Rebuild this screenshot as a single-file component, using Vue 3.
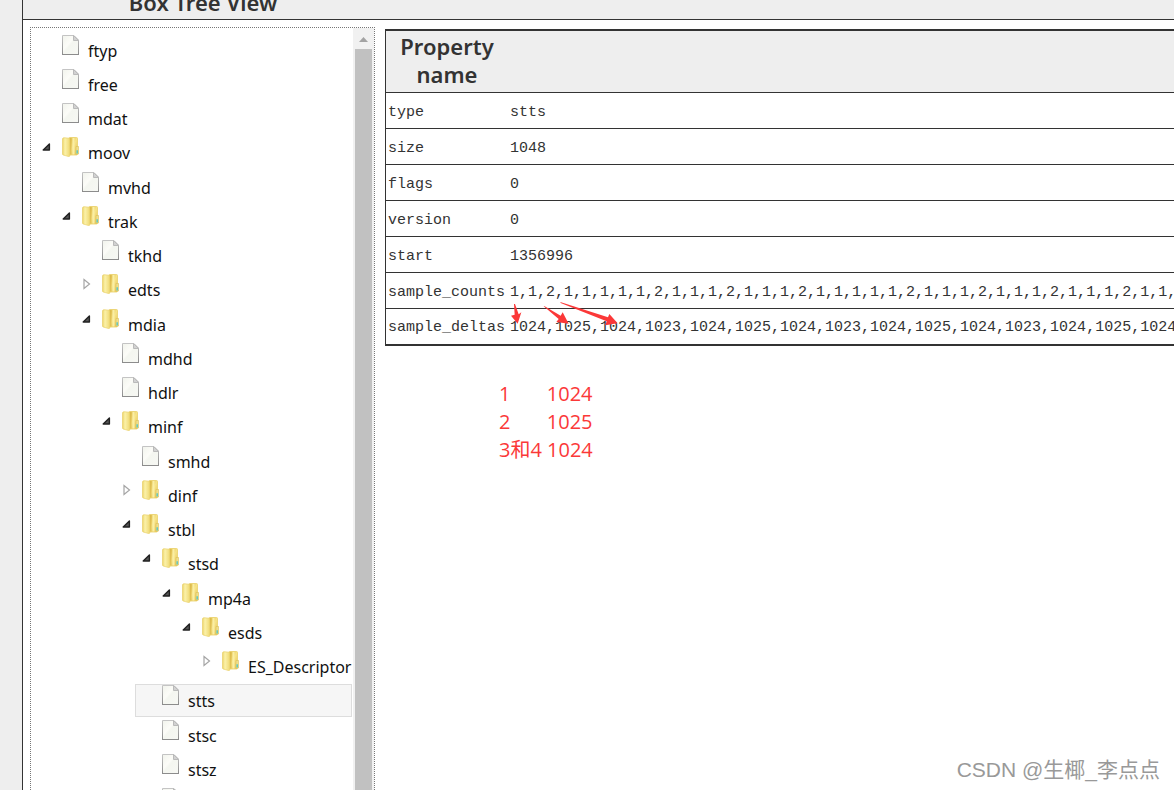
<script setup>
import { ref } from 'vue'

const nodes = [
  { name: 'ftyp', depth: 0, kind: 'file' },
  { name: 'free', depth: 0, kind: 'file' },
  { name: 'mdat', depth: 0, kind: 'file' },
  { name: 'moov', depth: 0, kind: 'open' },
  { name: 'mvhd', depth: 1, kind: 'file' },
  { name: 'trak', depth: 1, kind: 'open' },
  { name: 'tkhd', depth: 2, kind: 'file' },
  { name: 'edts', depth: 2, kind: 'closed' },
  { name: 'mdia', depth: 2, kind: 'open' },
  { name: 'mdhd', depth: 3, kind: 'file' },
  { name: 'hdlr', depth: 3, kind: 'file' },
  { name: 'minf', depth: 3, kind: 'open' },
  { name: 'smhd', depth: 4, kind: 'file' },
  { name: 'dinf', depth: 4, kind: 'closed' },
  { name: 'stbl', depth: 4, kind: 'open' },
  { name: 'stsd', depth: 5, kind: 'open' },
  { name: 'mp4a', depth: 6, kind: 'open' },
  { name: 'esds', depth: 7, kind: 'open' },
  { name: 'ES_Descriptor', depth: 8, kind: 'closed' },
  { name: 'stts', depth: 5, kind: 'file' },
  { name: 'stsc', depth: 5, kind: 'file' },
  { name: 'stsz', depth: 5, kind: 'file' },
  { name: 'stco', depth: 5, kind: 'file' }
]

const selected = ref('stts')

const counts = '1,1,2,1,1,1,1,1,2,1,1,1,2,1,1,1,2,1,1,1,1,1,2,1,1,1,2,1,1,1,2,1,1,1,2,1,1,1,2,1'
const deltas = Array(5).fill('1024,1025,1024,1023').join(',')

const properties = [
  ['type', 'stts'],
  ['size', '1048'],
  ['flags', '0'],
  ['version', '0'],
  ['start', '1356996'],
  ['sample_counts', counts],
  ['sample_deltas', deltas]
]
</script>

<template>
  <div class="page">
    <svg class="defs" width="0" height="0" aria-hidden="true">
      <defs>
        <linearGradient id="paper" x1="0" y1="0" x2="1" y2="1">
          <stop offset="0" stop-color="#f1f3ec" />
          <stop offset="0.4" stop-color="#fcfcf8" />
          <stop offset="0.5" stop-color="#f4f6f0" />
          <stop offset="1" stop-color="#f7f8f4" />
        </linearGradient>
        <linearGradient id="edge" x1="0" y1="0" x2="0" y2="1">
          <stop offset="0" stop-color="#c4c4c4" />
          <stop offset="1" stop-color="#8c8c8c" />
        </linearGradient>
        <linearGradient id="front" x1="0" y1="0" x2="1" y2="0">
          <stop offset="0" stop-color="#ecd468" />
          <stop offset="0.35" stop-color="#fbf1a9" />
          <stop offset="1" stop-color="#efd973" />
        </linearGradient>
        <linearGradient id="back" x1="0" y1="0" x2="1" y2="1">
          <stop offset="0" stop-color="#dcb844" />
          <stop offset="0.5" stop-color="#f7e488" />
          <stop offset="1" stop-color="#e3c04e" />
        </linearGradient>
      </defs>
    </svg>
    <div class="sheet">
      <header class="bar"><h2 class="title">Box Tree View</h2></header>
      <main class="content">
        <nav class="tree" aria-label="Box Tree View">
          <ul class="list">
            <li v-for="n in nodes" :key="n.name" class="node" :style="{ paddingLeft: n.depth * 20 + 'px' }">
              <button type="button" class="row" :class="{ selected: selected === n.name }" @click="selected = n.name">
                <svg class="twist" viewBox="0 0 10 12" aria-hidden="true">
                  <path v-if="n.kind === 'open'" d="M7.4 3V9H1.2Z" fill="#555" stroke="#222" stroke-width="1.4" stroke-linejoin="round" />
                  <path v-else-if="n.kind === 'closed'" d="M2 1.5L7.5 6L2 10.5Z" fill="#fff" stroke="#a5a5a5" stroke-width="1.2" />
                </svg>
                <svg v-if="n.kind === 'file'" class="icon" viewBox="0 0 17 20" aria-hidden="true">
                  <path d="M.5 .5H12L16.5 5V19.5H.5Z" fill="url(#paper)" stroke="url(#edge)" />
                  <path d="M0 19.5H17" stroke="#8c8c8c" />
                  <path d="M11.5 .5V5.5H16.5Z" fill="#d2d2d2" stroke="#bababa" />
                </svg>
                <svg v-else class="icon" viewBox="0 0 17 20" aria-hidden="true">
                  <path d="M7 1.5Q7 .5 8 .5H14.5Q15.5 .5 15.5 1.5V17Q15.5 18 14.5 18H7Z" fill="url(#back)" stroke="#ead069" stroke-width=".8" />
                  <path d="M8.8 1.5V17.5" stroke="#d8b241" />
                  <path d="M11.5 1V17.5" stroke="#faeea4" stroke-width="2" />
                  <path d="M14 9.5H16.6V17H14Z" fill="#efdf8c" stroke="#dcc057" stroke-width=".6" />
                  <path d="M14.4 13.2H16V16.6H14.4Z" fill="#68c8bd" />
                  <path d="M.5 2Q.5 .8 2 .7L6.8 1.2Q7.8 1.4 7.8 2.6V18.5Q7.8 19.8 6.5 19.5L1.2 18Q.5 17.8 .5 17Z" fill="url(#front)" stroke="#e9d16a" stroke-width=".7" />
                </svg>
                <span class="label">{{ n.name }}</span>
              </button>
            </li>
          </ul>
          <div class="scroll" aria-hidden="true">
            <svg class="up" viewBox="0 0 9 5"><path d="M0 5L4.5 0L9 5Z" fill="#a3a3a3" /></svg>
            <div class="thumb"></div>
          </div>
        </nav>
        <section class="details">
          <table class="props">
            <thead>
              <tr><th class="key" scope="col">Property name</th><th></th></tr>
            </thead>
            <tbody>
              <tr v-for="p in properties" :key="p[0]">
                <td>{{ p[0] }}</td><td>{{ p[1] }}</td>
              </tr>
            </tbody>
          </table>
          <svg class="arrows" viewBox="0 0 375 90" aria-hidden="true">
            <g fill="#fb3838">
              <path d="M42 12L45 12L56 43L64 37L53 71L33 47L44 44Z" />
              <path d="M131 19L134 19L182 47L188 37L206 71L169 66L176 57Z" />
              <path d="M180 8L183 7L324 52L328 42L353 70L316 76L320 64Z" />
            </g>
          </svg>
          <pre class="note">1       1024
2       1025
3和4 1024</pre>
        </section>
      </main>
    </div>
    <div class="mark">CSDN @生椰_李点点</div>
  </div>
</template>

<style>
body {
  margin: 0;
}
</style>

<style scoped>
.page {
  position: relative;
  box-sizing: border-box;
  height: 100vh;
  padding-left: 22px;
  overflow: hidden;
  background: #eee;
}
.defs {
  position: absolute;
}
.sheet {
  display: flex;
  flex-direction: column;
  height: 100%;
  border-left: 1px solid #333;
  background: #fff;
}
.bar {
  display: flex;
  align-items: flex-end;
  flex: none;
  box-sizing: border-box;
  height: 20px;
  padding: 0 0 3px 7px;
  overflow: hidden;
  border-bottom: 1px solid #333;
  background: #eee;
}
.title {
  width: 346px;
  margin: 0;
  color: #333;
  font: 600 22px/28px "Noto Sans", sans-serif;
  text-align: center;
}
.content {
  display: flex;
  flex: 1;
  gap: 10px;
  min-height: 0;
  padding: 7px 0 0 7px;
}
.tree {
  display: flex;
  flex: none;
  box-sizing: border-box;
  width: 345px;
  overflow: hidden;
  border: 1px dotted #777;
  border-bottom: 0;
}
.list {
  flex: 1;
  min-width: 0;
  margin: 0;
  padding: 6px 1px 0 4px;
  list-style: none;
}
.node {
  padding-bottom: 1px;
}
.node:nth-child(4n) {
  padding-bottom: 2px;
}
.row {
  display: flex;
  align-items: flex-start;
  box-sizing: border-box;
  width: 100%;
  height: 33px;
  padding: 0;
  border: 1px solid transparent;
  background: none;
  color: #111;
  font: 16px/32px "Noto Sans", sans-serif;
  text-align: left;
  white-space: nowrap;
}
.selected {
  border-color: #ddd;
  background: #f6f6f6;
}
.twist {
  flex: none;
  width: 10px;
  height: 12px;
  margin: 4px 10px 0 6px;
}
.icon {
  flex: none;
  width: 17px;
  height: 20px;
}
.label {
  margin-left: 9px;
}
.scroll {
  display: flex;
  flex-direction: column;
  align-items: center;
  flex: none;
  width: 21px;
  background: #f1f1f1;
}
.up {
  flex: none;
  width: 9px;
  height: 5px;
  margin: 9px 0 7px;
}
.thumb {
  flex: 1;
  width: 17px;
  background: #c1c1c1;
}
.details {
  position: relative;
  flex: 1;
  min-width: 0;
  padding-top: 2px;
  overflow: hidden;
}
.props {
  border-collapse: collapse;
  border: 2px solid #333;
  border-left-width: 1px;
  color: #333;
  font: 15px/20px "Liberation Mono", monospace;
  white-space: nowrap;
}
.props tr {
  height: 36px;
  border-bottom: 1px solid #333;
}
.props tbody tr:last-child {
  border-bottom-width: 2px;
}
.props thead {
  background: #eee;
}
.props th {
  padding: 1px 2px 4px;
  font: 600 22px/28px "Noto Sans", sans-serif;
  white-space: normal;
}
.key {
  width: 118px;
}
.props td {
  padding: 4px 3px 0 2px;
}
.arrows {
  position: absolute;
  top: 273px;
  left: 115px;
  width: 125px;
  height: 30px;
}
.note {
  position: absolute;
  top: 353px;
  left: 114px;
  margin: 0;
  color: #fb3838;
  font: 20px/28px "Open Sans", "Noto Sans CJK SC", sans-serif;
}
.mark {
  position: absolute;
  right: 14px;
  bottom: 4px;
  color: #999;
  font: 21px/32px "Liberation Sans", "Noto Sans CJK SC", sans-serif;
}
</style>
